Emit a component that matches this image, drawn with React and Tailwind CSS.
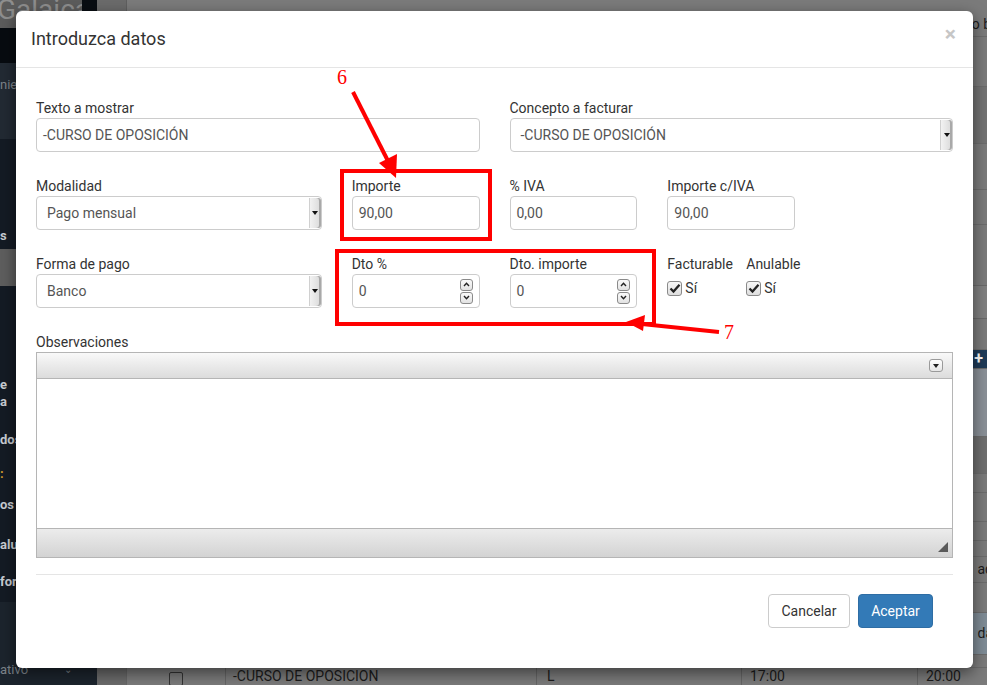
import React from "react";

const font = { fontFamily: "Roboto, 'Noto Sans', sans-serif" };

const Label = ({ children }) => (
  <div className="h-[20px] leading-[20px] text-[14px] text-[#333] whitespace-nowrap">{children}</div>
);

const TextInput = ({ value }) => (
  <div className="h-[34px] border border-[#ccc] rounded-[4px] bg-white px-[6px] flex items-center text-[14px] text-[#555]">
    {value}
  </div>
);

const SelectBox = ({ value }) => (
  <div className="h-[34px] border border-[#ccc] rounded-[4px] bg-white flex items-stretch text-[14px] text-[#555]">
    <div className="flex-1 flex items-center px-[10px]">{value}</div>
    <div className="w-[12px] my-[1px] bg-gradient-to-r from-[#f2f2f2] to-[#d9d9d9] border-l border-[#d0d0d0] shadow-[inset_-2px_0_0_#a9a9a9] rounded-r-[3px] flex items-center justify-center">
      <div className="w-0 h-0 border-l-[3px] border-r-[3px] border-t-[4px] border-l-transparent border-r-transparent border-t-[#111]" />
    </div>
  </div>
);

const SpinBtn = ({ up }) => (
  <div className="w-[13px] h-[12px] border border-[#8a8a8a] rounded-[3px] bg-gradient-to-b from-[#fafafa] to-[#e2e2e2] flex items-center justify-center">
    <svg width="7" height="5" viewBox="0 0 7 5">
      <path d={up ? "M1 4 L3.5 1.3 L6 4" : "M1 1 L3.5 3.7 L6 1"} fill="none" stroke="#222" strokeWidth="1.4" />
    </svg>
  </div>
);

const NumberInput = ({ value }) => (
  <div className="h-[34px] border border-[#ccc] rounded-[4px] bg-white pl-[6px] pr-[6px] flex items-center text-[14px] text-[#555]">
    <div className="flex-1">{value}</div>
    <div className="flex flex-col gap-[1px]">
      <SpinBtn up />
      <SpinBtn />
    </div>
  </div>
);

const Check = () => (
  <div className="flex items-center gap-[3px] mt-[4px]">
    <div className="w-[15px] h-[15px] border border-[#8a8a8a] rounded-[3px] bg-gradient-to-b from-[#f7f7f7] to-[#dedede] flex items-center justify-center">
      <svg width="12" height="11" viewBox="0 0 12 11">
        <path d="M1.5 5.5 L4.5 8.5 L10.5 1.8" fill="none" stroke="#222" strokeWidth="2.3" />
      </svg>
    </div>
    <span className="text-[14px] text-[#333]">Sí</span>
  </div>
);

const Sidebar = () => (
  <div className="w-[97px] shrink-0 flex flex-col bg-[#141b24] text-[13px]">
    <div className="h-[28px] flex shrink-0">
      <div className="w-[82px] bg-[#5c5c5c] overflow-hidden">
        <div className="text-[28px] leading-none text-[#8e8e8e] -mt-[4px] -ml-[3px]">Galaica</div>
      </div>
      <div className="flex-1 bg-[#090d12]" />
    </div>
    <div className="h-[35px] bg-[#070b10] shrink-0" />
    <div className="h-[76px] bg-[#222a33] shrink-0 pt-[12px] text-[#7d838a]">nier</div>
    <div className="h-[110px] shrink-0 flex items-end pb-[4px] font-bold text-[#c9cdd2]">s</div>
    <div className="h-[37px] bg-[#5e5e5e] shrink-0" />
    <div className="h-[90px] shrink-0" />
    <div className="font-bold text-[#c9cdd2] leading-[17px]">e<br />a</div>
    <div className="font-bold text-[#c9cdd2] mt-[20px]">dos</div>
    <div className="font-bold text-[#d39a2c] mt-[14px]">:</div>
    <div className="font-bold text-[#c9cdd2] mt-[12px]">os c</div>
    <div className="font-bold text-[#c9cdd2] mt-[20px]">alu</div>
    <div className="font-bold text-[#c9cdd2] mt-[18px]">for</div>
    <div className="flex-1 mt-[10px] bg-[#1c242d] flex items-end pb-[6px]">
      <div className="w-[82px] flex justify-between items-center text-[#7d838a]">
        <span>ativo</span>
        <span className="text-[10px] mr-[10px]">⌄</span>
      </div>
    </div>
  </div>
);

const Row = ({ h, bg = "bg-[#7b7b7b]", children }) => (
  <div className={`${h} ${bg} border-b border-[#6c6c6c] flex items-center justify-end shrink-0 text-[14px] text-[#1c1c1c] overflow-hidden whitespace-nowrap`}>
    {children}
  </div>
);

const Main = () => (
  <div className="flex-1 flex flex-col bg-[#7b7b7b]">
    <div className="h-[37px] flex border-b border-[#6c6c6c] shrink-0">
      <div className="w-[30px] bg-[#6b6b6b] border-r border-[#5f5f5f]" />
      <div className="flex-1 flex justify-end items-start pt-[14px] text-[14px] text-[#1c1c1c] mr-[-4px]">o b</div>
    </div>
    <Row h="h-[50px]" />
    <Row h="h-[57px]" bg="bg-[#737373]" />
    <Row h="h-[46px]" />
    <Row h="h-[35px]" />
    <Row h="h-[125px]">
      <div className="w-[26px] h-[34px] border border-[#6a6a6a] rounded-[4px] mr-[-8px] mt-[30px] bg-[#808080]" />
    </Row>
    <Row h="h-[19px]" bg="bg-[#1f3b58]">
      <span className="text-white font-bold text-[16px] mr-[4px]">+</span>
    </Row>
    <Row h="h-[68px]" bg="bg-[#8a9097]" />
    <Row h="h-[37px]" bg="bg-[#6f6f6f]" />
    <Row h="h-[19px]" />
    <Row h="h-[29px]" />
    <Row h="h-[19px]" />
    <Row h="h-[16px]" />
    <Row h="h-[26px]">
      <span className="mr-[-6px]">ad</span>
    </Row>
    <Row h="h-[30px]" />
    <Row h="h-[42px]" bg="bg-[#7f8c96]">
      <span className="mr-[-6px]">da</span>
    </Row>
    <Row h="h-[13px]" />
    <div className="h-[17px] flex text-[14px] text-[#1c1c1c] shrink-0 overflow-hidden leading-[17px]">
      <div className="w-[30px] bg-[#6b6b6b] border-r border-[#666]" />
      <div className="w-[99px] border-r border-[#666] flex justify-center">
        <div className="w-[14px] h-[14px] border border-[#333] rounded-[2px] mt-[4px]" />
      </div>
      <div className="w-[311px] border-r border-[#666] pl-[7px]">-CURSO DE OPOSICION</div>
      <div className="w-[205px] border-r border-[#666] pl-[10px]">L</div>
      <div className="w-[176px] border-r border-[#666] pl-[8px]">17:00</div>
      <div className="flex-1 pl-[8px]">20:00</div>
    </div>
  </div>
);

const Modal = () => (
  <div className="absolute left-[16px] top-[11px] w-[957px] h-[657px] bg-white rounded-[6px] shadow-[0_5px_15px_rgba(0,0,0,0.5)] flex flex-col">
    <div className="h-[57px] border-b border-[#e5e5e5] px-[15px] flex justify-between items-start shrink-0">
      <div className="text-[18px] leading-[26px] text-[#333] mt-[15px]">Introduzca datos</div>
      <div className="text-[21px] font-bold leading-none text-[#c6c6c6] mt-[13px] mr-[2px]">×</div>
    </div>
    <div className="px-[20px] pt-[30px] flex flex-col">
      <div className="grid grid-cols-12 gap-x-[30px] gap-y-[24px]">
        <div className="col-span-6">
          <Label>Texto a mostrar</Label>
          <TextInput value="-CURSO DE OPOSICIÓN" />
        </div>
        <div className="col-span-6">
          <Label>Concepto a facturar</Label>
          <SelectBox value="-CURSO DE OPOSICIÓN" />
        </div>

        <div className="col-span-4">
          <Label>Modalidad</Label>
          <SelectBox value="Pago mensual" />
        </div>
        <div className="col-span-2">
          <Label>Importe</Label>
          <TextInput value="90,00" />
        </div>
        <div className="col-span-2">
          <Label>% IVA</Label>
          <TextInput value="0,00" />
        </div>
        <div className="col-span-2">
          <Label>Importe c/IVA</Label>
          <TextInput value="90,00" />
        </div>
        <div className="col-span-2" />

        <div className="col-span-4">
          <Label>Forma de pago</Label>
          <SelectBox value="Banco" />
        </div>
        <div className="col-span-2">
          <Label>Dto %</Label>
          <NumberInput value="0" />
        </div>
        <div className="col-span-2">
          <Label>Dto. importe</Label>
          <NumberInput value="0" />
        </div>
        <div className="col-span-1">
          <Label>Facturable</Label>
          <Check />
        </div>
        <div className="col-span-1">
          <Label>Anulable</Label>
          <Check />
        </div>
        <div className="col-span-2" />

        <div className="col-span-12">
          <Label>Observaciones</Label>
          <div className="h-[206px] border border-[#b5b5b5] flex flex-col">
            <div className="h-[26px] border-b border-[#b5b5b5] bg-gradient-to-b from-[#f9f9f9] to-[#dcdcdc] flex items-center justify-end pr-[9px] shrink-0">
              <div className="w-[14px] h-[13px] border border-[#9a9a9a] rounded-[3px] bg-gradient-to-b from-white to-[#e6e6e6] flex items-center justify-center">
                <div className="w-0 h-0 border-l-[3px] border-r-[3px] border-t-[4px] border-l-transparent border-r-transparent border-t-[#222]" />
              </div>
            </div>
            <div className="flex-1 bg-white" />
            <div className="h-[29px] border-t border-[#b5b5b5] bg-gradient-to-b from-[#ececec] to-[#d3d3d3] flex items-end justify-end pr-[4px] pb-[5px] shrink-0">
              <svg width="10" height="10" viewBox="0 0 10 10">
                <polygon points="10,0 10,10 0,10" fill="#5a5a5a" />
              </svg>
            </div>
          </div>
        </div>
      </div>
      <div className="mt-[16px] border-t border-[#e5e5e5]" />
      <div className="mt-[19px] flex justify-end gap-[8px] pr-[20px]">
        <div className="w-[82px] h-[34px] border border-[#ccc] rounded-[4px] bg-white flex items-center justify-center text-[14px] text-[#333]">
          Cancelar
        </div>
        <div className="w-[75px] h-[34px] border border-[#2e6da4] rounded-[4px] bg-[#337ab7] flex items-center justify-center text-[14px] text-white">
          Aceptar
        </div>
      </div>
    </div>
  </div>
);

const Annotations = () => (
  <svg className="absolute inset-0 pointer-events-none" width="987" height="685" viewBox="0 0 987 685">
    <rect x="342" y="171" width="148" height="68" fill="none" stroke="#ff0000" strokeWidth="4" />
    <rect x="337" y="251" width="317" height="73" fill="none" stroke="#ff0000" strokeWidth="4" />
    <line x1="353" y1="92" x2="389" y2="163" stroke="#ff0000" strokeWidth="4" />
    <polygon points="396,178 379,163 397,154" fill="#ff0000" />
    <line x1="719" y1="332" x2="642" y2="324" stroke="#ff0000" strokeWidth="4" />
    <polygon points="626,322 645,315 643,331" fill="#ff0000" />
    <text x="337" y="84" fill="#ff0000" fontSize="20" fontFamily="'Liberation Serif', serif">6</text>
    <text x="724" y="339" fill="#ff0000" fontSize="20" fontFamily="'Liberation Serif', serif">7</text>
  </svg>
);

export default function App() {
  return (
    <div className="relative w-[987px] h-[685px] overflow-hidden flex" style={font}>
      <Sidebar />
      <Main />
      <Modal />
      <Annotations />
    </div>
  );
}
